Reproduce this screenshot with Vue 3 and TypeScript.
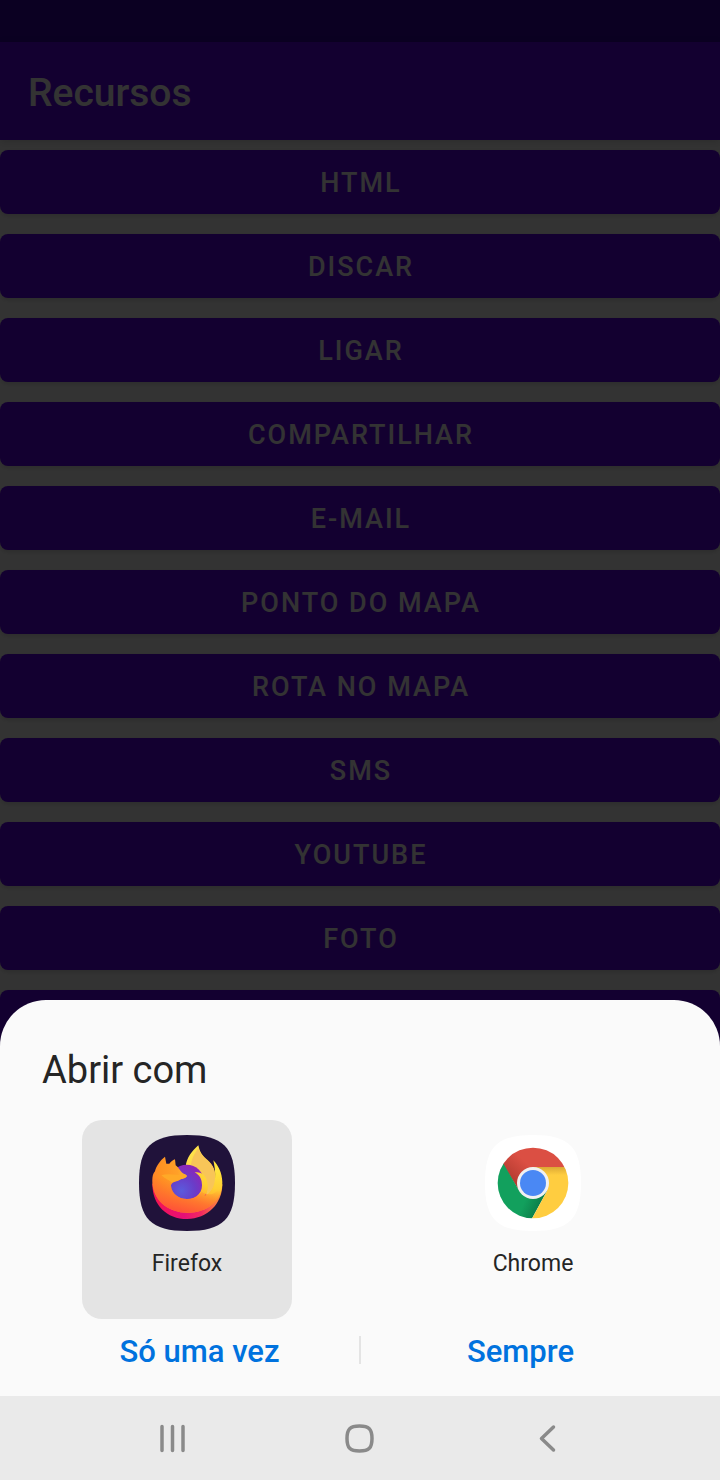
<script setup lang="ts">
import { ref } from 'vue'

const resources: string[] = [
  'HTML', 'Discar', 'Ligar', 'Compartilhar', 'E-mail', 'Ponto do mapa',
  'Rota no mapa', 'SMS', 'YouTube', 'Foto', 'Vídeo',
]
const selected = ref<'firefox' | 'chrome'>('firefox')
</script>

<template>
  <div class="phone">
    <div class="screen">
      <div class="status-bar"></div>
      <header class="app-bar"><h1>Recursos</h1></header>
      <main class="resources">
        <button v-for="name in resources" :key="name" type="button" class="resource">{{ name }}</button>
      </main>
      <div class="scrim"></div>

      <section class="sheet" role="dialog" aria-labelledby="sheet-title">
        <h2 id="sheet-title">Abrir com</h2>
        <div class="apps">
          <button type="button" class="app" :class="{ selected: selected === 'firefox' }" @click="selected = 'firefox'">
            <svg class="app-icon" viewBox="27 30 288 288" aria-hidden="true">
              <defs>
                <radialGradient id="fx-body" cx="262" cy="125" r="220" gradientUnits="userSpaceOnUse">
                  <stop offset="0" stop-color="#ffe840" />
                  <stop offset="0.3" stop-color="#ffcf33" />
                  <stop offset="0.55" stop-color="#ffa028" />
                  <stop offset="0.78" stop-color="#ff9222" />
                  <stop offset="1" stop-color="#ff7a2c" />
                </radialGradient>
                <linearGradient id="fx-warm" x1="175" y1="175" x2="155" y2="262" gradientUnits="userSpaceOnUse">
                  <stop offset="0" stop-color="#ff6a30" stop-opacity="0" />
                  <stop offset="0.6" stop-color="#ff6432" stop-opacity="0.75" />
                  <stop offset="1" stop-color="#ff5238" />
                </linearGradient>
                <linearGradient id="fx-rim" x1="67" y1="0" x2="277" y2="0" gradientUnits="userSpaceOnUse">
                  <stop offset="0" stop-color="#f5154f" />
                  <stop offset="0.45" stop-color="#e60f78" />
                  <stop offset="0.7" stop-color="#f22a60" />
                  <stop offset="1" stop-color="#ff9a35" />
                </linearGradient>
                <radialGradient id="fx-globe" cx="0.35" cy="0.75" r="0.8">
                  <stop offset="0" stop-color="#5b5bdc" />
                  <stop offset="0.5" stop-color="#6a3cc8" />
                  <stop offset="1" stop-color="#9322b4" />
                </radialGradient>
                <linearGradient id="fx-tail" x1="0.2" y1="0" x2="0.7" y2="1">
                  <stop offset="0" stop-color="#ffe94e" />
                  <stop offset="1" stop-color="#ffb52e" />
                </linearGradient>
              </defs>
              <path fill="#20123a" d="M27 174C27 66 63 30 171 30S315 66 315 174 279 318 171 318 27 282 27 174Z" />
              <path fill="url(#fx-rim)" d="M67 176C67 240 110 282 171 282C232 282 277 236 277 178Z" />
              <path fill="url(#fx-tail)" d="M167 126C169 98 186 78 205 61C210 87 224 98 238 110C254 125 258 147 256 171L238 220L190 150Z" />
              <path fill="#f8c558" d="M183 119C186 97 197 80 205 70C211 88 224 99 237 111C253 126 258 147 256 171C251 192 241 203 228 212C238 177 228 150 205 137Z" />
              <circle cx="170" cy="171" r="52" fill="url(#fx-globe)" />
              <path fill="url(#fx-body)" d="M250 106C265 122 276 143 277 171C278 228 231 263 174 263C111 263 67 222 67 167C67 154 69 145 75 139C77 126 91 105 105 95L109 116L118 116C123 109 131 104 135 103L137 121C147 127 151 142 163 147C168 149 170 151 171 154C161 161 153 161 145 167C131 170 123 174 123 183C126 208 147 222 171 222C202 222 221 199 215 170C213 156 203 147 194 142C214 139 229 151 232 174C236 192 230 206 223 213C250 203 264 170 250 106Z" />
              <path fill="url(#fx-warm)" d="M67 167C67 222 111 263 174 263C231 263 278 228 277 171C264 205 242 218 215 200C207 213 192 222 171 222C147 222 126 208 123 183V160H67Z" />
              <path fill="#ffa927" d="M94 151C111 145 129 150 145 149C154 149 161 145 168 150C174 155 166 160 156 162C142 164 135 172 124 172C118 165 107 163 94 151Z" />
            </svg>
            <span>Firefox</span>
          </button>
          <button type="button" class="app" :class="{ selected: selected === 'chrome' }" @click="selected = 'chrome'">
            <svg class="app-icon" viewBox="30 30 288 288" aria-hidden="true">
              <defs>
                <clipPath id="cr-disc"><circle cx="174" cy="174" r="106" /></clipPath>
                <linearGradient id="cr-red" x1="105" y1="160" x2="150" y2="110" gradientUnits="userSpaceOnUse">
                  <stop offset="0" stop-color="#b63c31" /><stop offset="1" stop-color="#db4f43" />
                </linearGradient>
                <linearGradient id="cr-yellow" x1="0" y1="126" x2="0" y2="150" gradientUnits="userSpaceOnUse">
                  <stop offset="0" stop-color="#dca834" /><stop offset="1" stop-color="#ffcd40" />
                </linearGradient>
                <linearGradient id="cr-green" x1="200" y1="235" x2="155" y2="215" gradientUnits="userSpaceOnUse">
                  <stop offset="0" stop-color="#0c7d49" /><stop offset="1" stop-color="#12a05d" />
                </linearGradient>
              </defs>
              <path fill="#fff" d="M30 174C30 66 66 30 174 30S318 66 318 174 282 318 174 318 30 282 30 174Z" />
              <g clip-path="url(#cr-disc)">
                <path fill="url(#cr-red)" d="M60 60H290V126H174L133 198L60 80Z" />
                <path fill="url(#cr-green)" d="M60 70L86 117L133 198H216L169 284H60Z" />
                <path fill="url(#cr-yellow)" d="M174 126H290V290H166L216 198Z" />
              </g>
              <circle cx="174" cy="174" r="48" fill="#f1f1f1" />
              <circle cx="174" cy="174" r="39" fill="#4a88f4" />
            </svg>
            <span>Chrome</span>
          </button>
        </div>
        <div class="actions">
          <button type="button">Só uma vez</button>
          <i class="divider"></i>
          <button type="button">Sempre</button>
        </div>
      </section>
    </div>

    <nav class="nav-bar">
      <button type="button" aria-label="Recentes">
        <svg viewBox="0 0 32 32"><path d="M5 4.500V28.500M15.500 4.500V28.500M26 4.500V28.500" /></svg>
      </button>
      <button type="button" aria-label="Início">
        <svg viewBox="0 0 32 32"><path d="M15.500 4C25 4 28 7 28 16.500S25 29 15.500 29 3 26 3 16.500 6 4 15.500 4Z" /></svg>
      </button>
      <button type="button" aria-label="Voltar">
        <svg viewBox="0 0 32 32"><path d="M22.500 5L10.500 16.500L22.500 28" /></svg>
      </button>
    </nav>
  </div>
</template>

<style>
body {
  margin: 0;
}
</style>

<style scoped>
.phone {
  display: flex;
  flex-direction: column;
  height: 100vh;
  font-family: Roboto, "Noto Sans", sans-serif;
}
button {
  border: 0;
  padding: 0;
  margin: 0;
  background: none;
  font-family: inherit;
  cursor: pointer;
}
.screen {
  position: relative;
  flex: 1;
  min-height: 0;
  overflow: hidden;
  background: #fff;
}
.status-bar {
  height: 42px;
  background: #3700a8;
}
.app-bar {
  display: flex;
  align-items: center;
  height: 98px;
  padding: 4px 28px 0;
  box-sizing: border-box;
  background: #6200ee;
  box-shadow: 0 2px 8px rgba(0, 0, 0, 0.15);
}
h1 {
  margin: 0;
  font-size: 39px;
  font-weight: 500;
  color: #fff;
}
.resources {
  display: flex;
  flex-direction: column;
  gap: 20px;
  padding-top: 10px;
}
.resource {
  height: 64px;
  flex: none;
  padding: 2px 0 0 2px;
  border-radius: 8px;
  background: #6200ee;
  box-shadow: 0 2px 4px rgba(0, 0, 0, 0.15);
  color: #fff;
  font-size: 27px;
  font-weight: 500;
  letter-spacing: 2px;
  text-transform: uppercase;
}
.scrim {
  position: absolute;
  inset: 0;
  background: rgba(0, 0, 0, 0.8);
}
.sheet {
  position: absolute;
  left: 0;
  right: 0;
  bottom: 0;
  border-radius: 46px 46px 0 0;
  background: #fafafa;
  color: #252525;
}
h2 {
  margin: 0;
  padding: 46px 42px 26px;
  font-size: 38px;
  line-height: 48px;
  font-weight: 400;
}
.apps {
  display: grid;
  grid-template-columns: 1fr 1fr;
  justify-items: center;
  padding: 0 14px;
}
.app {
  display: flex;
  flex-direction: column;
  align-items: center;
  gap: 17px;
  width: 210px;
  height: 199px;
  padding-top: 15px;
  border-radius: 20px;
  color: #252525;
  font-size: 23px;
  line-height: 32px;
}
.app.selected {
  background: #e4e4e4;
}
.app-icon {
  width: 96px;
  height: 96px;
}
.actions {
  display: flex;
  align-items: center;
  height: 77px;
  padding: 0 40px 16px;
  box-sizing: border-box;
}
.actions button {
  flex: 1;
  height: 60px;
  padding-top: 4px;
  color: #0072de;
  font-size: 31px;
  font-weight: 500;
}
.divider {
  width: 2px;
  height: 28px;
  background: #e4e4e4;
}
.nav-bar {
  display: flex;
  justify-content: center;
  height: 84px;
  background: #eaeaea;
}
.nav-bar button {
  display: flex;
  align-items: center;
  justify-content: center;
  width: 187px;
}
.nav-bar svg {
  width: 32px;
  height: 32px;
  fill: none;
  stroke: #8a8a8a;
  stroke-width: 3.500;
  stroke-linecap: round;
  stroke-linejoin: round;
}
</style>
